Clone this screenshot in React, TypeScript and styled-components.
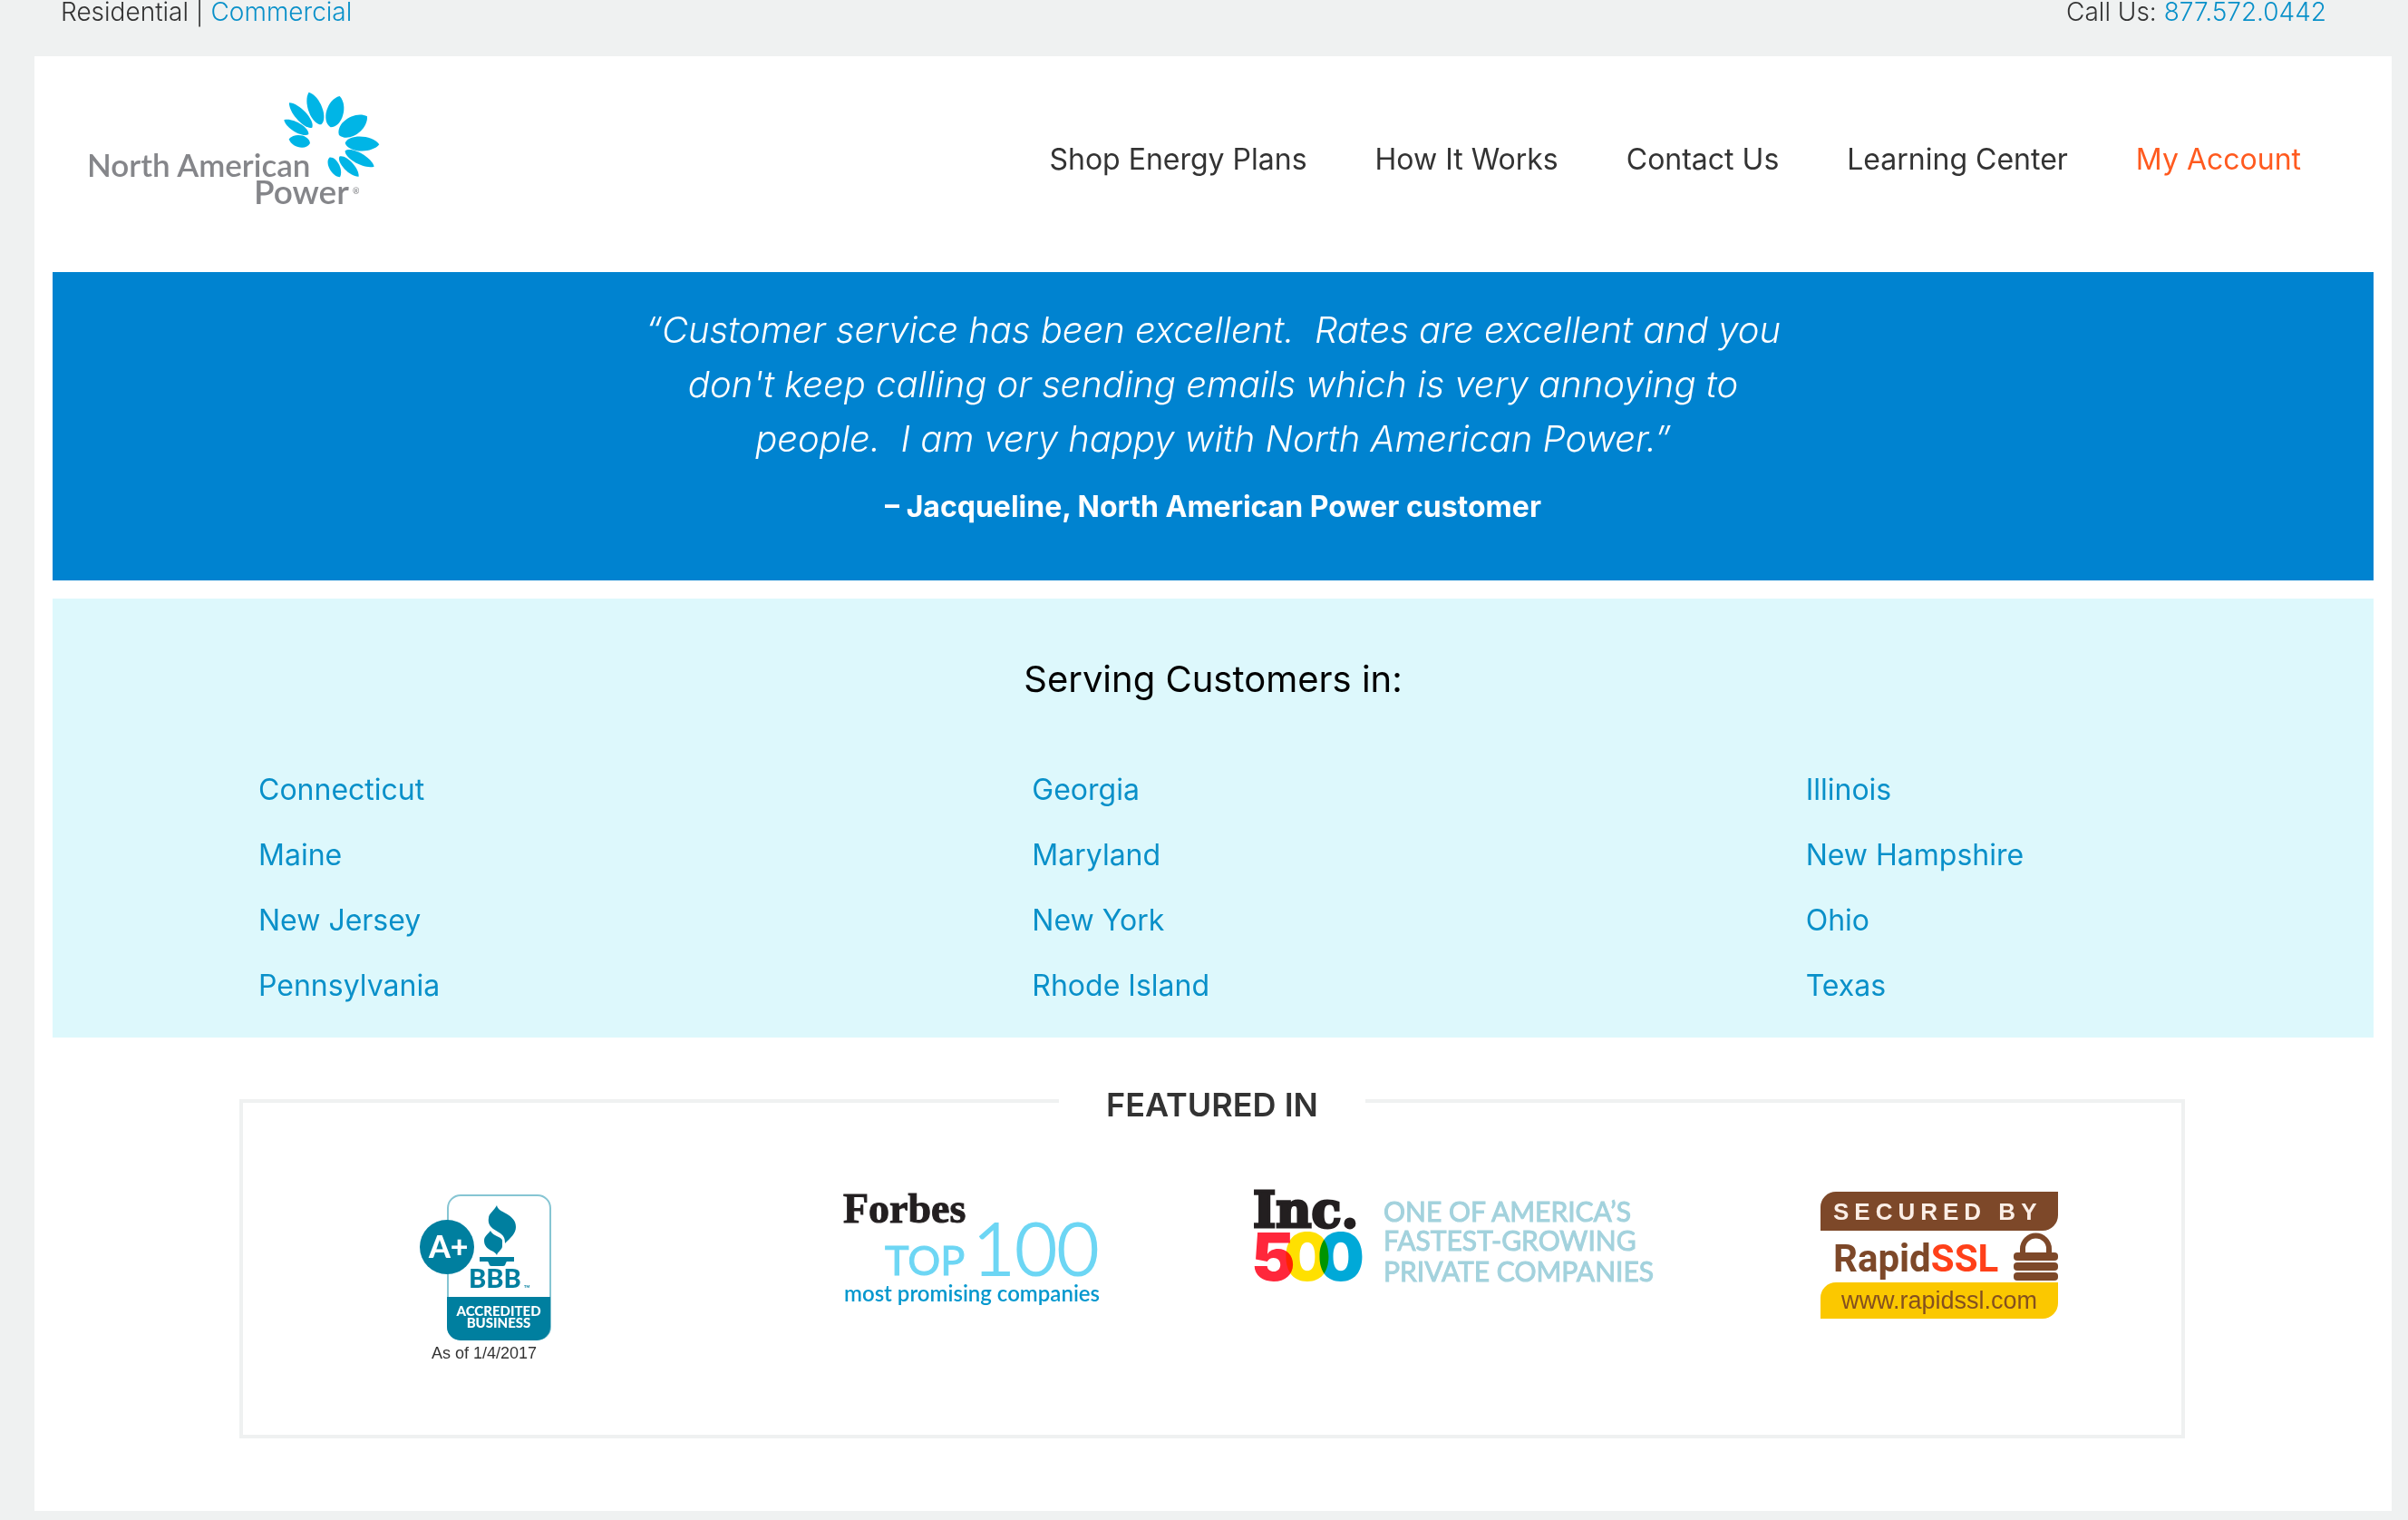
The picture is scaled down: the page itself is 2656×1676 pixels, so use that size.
import React from 'react';
import styled, { createGlobalStyle } from 'styled-components';

const color = {
  page: '#eff1f1',
  ink: '#333333',
  link: '#0990c9',
  accent: '#ff5a1f',
  brand: '#0083d0',
  mist: '#ddf8fc',
  teal: '#007f9f',
  brown: '#7d4829',
};

const GlobalStyle = createGlobalStyle`
  *, *::before, *::after { box-sizing: border-box; }
  body {
    margin: 0;
    background: ${color.page};
    color: ${color.ink};
    font-family: Inter, 'Open Sans', sans-serif;
    font-size: 32px;
    line-height: 40px;
  }
  ul, h2, p, blockquote, figure { margin: 0; padding: 0; }
  ul { list-style: none; }
  svg { display: block; overflow: visible; }
`;

const TopBar = styled.div`
  display: flex;
  justify-content: space-between;
  padding: 0 90px 36px 67px;
  font-size: 28px;
  font-weight: 300;
  line-height: 26px;
`;

const TextLink = styled.a`
  color: ${color.link};
  text-decoration: none;
`;

const Card = styled.div`
  margin: 0 18px 10px 38px;
  padding: 0 20px 80px;
  background: #ffffff;
`;

const Header = styled.header`
  display: flex;
  justify-content: space-between;
  align-items: flex-start;
  padding: 40px 80px 72px 40px;
`;

const Nav = styled.nav`
  display: flex;
  gap: 75px;
  padding-top: 54px;
`;

const NavLink = styled.a<{ $highlight?: boolean }>`
  color: ${(p) => (p.$highlight ? color.accent : color.ink)};
  text-decoration: none;
`;

const Testimonial = styled.figure`
  padding: 34px 40px 61px;
  background: ${color.brand};
  color: #ffffff;
  text-align: center;
`;

const Quote = styled.blockquote`
  max-width: 1270px;
  margin: 0 auto 25px;
  font-size: 40px;
  font-style: italic;
  font-weight: 300;
  line-height: 60px;
`;

const Attribution = styled.figcaption`
  font-weight: 700;
`;

const Serving = styled.section`
  margin-top: 20px;
  padding: 59px 0 21px;
  background: ${color.mist};
`;

const ServingTitle = styled.h2`
  margin-bottom: 56px;
  color: #000000;
  font-size: 40px;
  font-weight: 400;
  line-height: 60px;
  text-align: center;
`;

const StateGrid = styled.ul`
  display: grid;
  grid-template-columns: repeat(3, 1fr);
`;

const StateItem = styled.li`
  padding-left: 227px;
  line-height: 72px;
`;

const Featured = styled.section`
  margin: 68px 208px 0 206px;
  border: 4px solid ${color.page};
`;

const FeaturedTitle = styled.h2`
  width: fit-content;
  margin: -20px auto 74px;
  padding: 0 52px;
  background: #ffffff;
  font-size: 36px;
  font-weight: 600;
  line-height: 44px;
`;

const LogoRow = styled.ul`
  display: grid;
  grid-template-columns: repeat(4, 1fr);
  justify-items: center;
  align-items: start;
  padding-bottom: 82px;
`;

type Petal = [number, number, number, number, number];

/* inner point, outer point, thickness */
const petals: Petal[] = [
  [786, 204, 716, 190, 40],
  [781, 174, 700, 127, 32],
  [793, 152, 717, 70, 36],
  [823, 142, 782, 35, 46],
  [854, 151, 884, 48, 56],
  [882, 177, 975, 115, 60],
  [902, 203, 1015, 208, 48],
  [902, 229, 998, 281, 36],
  [883, 248, 947, 314, 32],
  [850, 251, 885, 316, 34],
];

const petalPath = ([x0, y0, x1, y1, w]: Petal) => {
  const dx = x1 - x0;
  const dy = y1 - y0;
  const len = Math.hypot(dx, dy);
  const nx = (-dy / len) * (w / 1.5);
  const ny = (dx / len) * (w / 1.5);
  const at = (t: number, side: number) =>
    `${x0 + dx * t + nx * side} ${y0 + dy * t + ny * side}`;
  return `M${x0} ${y0}C${at(0.1, 1)} ${at(0.8, 1)} ${x1} ${y1}C${at(0.8, -1)} ${at(0.1, -1)} ${x0} ${y0}Z`;
};

const BrandLogo = () => (
  <svg width="320" height="126" viewBox="0 0 320 126" role="img" aria-label="North American Power">
    <g transform="translate(-18 -12) scale(0.3333)" fill="#00b5e6">
      {petals.map((p) => (
        <path key={p.join()} d={petalPath(p)} />
      ))}
    </g>
    <g fill="#85868a" fontFamily="Lato, sans-serif" fontWeight="600" fontSize="35">
      <text x="-2" y="93">North American</text>
      <text x="182" y="123" fontSize="37">Power</text>
      <text x="291" y="112" fontSize="9">®</text>
    </g>
  </svg>
);

const BbbLogo = () => (
  <svg width="146" height="186" viewBox="0 0 146 186" role="img" aria-label="BBB Accredited Business">
    <rect x="32" y="4" width="113" height="159" rx="14" fill="#ffffff" stroke="#86c5d3" strokeWidth="2" />
    <path d="M31 116H145V149a15 15 0 0 1-15 15H46a15 15 0 0 1-15-15Z" fill={color.teal} />
    <circle cx="31" cy="61" r="30" fill={color.teal} />
    <g fill={color.teal}>
      <path d="M86 15C87 20 91 21 96 24C103 28 107 32 107 39C107 46 101 51 95 57C95 52 94 49 90 46L82 41C78 38 76 34 77 29C77 24 83 21 86 15Z" />
      <path d="M79 43C76 47 72 49 72 54C72 60 76 63 80 65C83 66 85 68 86 70C87 66 92 64 92 60V54C92 52 90 51 88 50C84 48 80 46 79 43Z" />
      <path d="M67 72H105V77H97C95 79 96 82 93 82H80C77 82 78 79 76 77H67Z" />
    </g>
    <g fontFamily="Lato, sans-serif" fontWeight="900">
      <text x="11" y="73" fontSize="34" fill="#ffffff">A+</text>
      <text x="55" y="106" fontSize="29" fill={color.teal}>BBB</text>
      <text x="116" y="106" fontSize="4" fill={color.teal}>TM</text>
      <g fontSize="15" fill="#ffffff" textAnchor="middle">
        <text x="88" y="137">ACCREDITED</text>
        <text x="88" y="150">BUSINESS</text>
      </g>
    </g>
    <text x="14" y="184" fontFamily="'Liberation Sans', sans-serif" fontSize="18" fill="#333333">
      As of 1/4/2017
    </text>
  </svg>
);

const ForbesLogo = () => (
  <svg width="280" height="126" viewBox="0 0 280 126" role="img" aria-label="Forbes Top 100 most promising companies">
    <text x="0" y="34" fontFamily="'Liberation Serif', serif" fontWeight="700" fontSize="46" fill="#231f20" stroke="#231f20">
      Forbes
    </text>
    <g fontFamily="Lato, sans-serif" fill="#6dd6f4" stroke="#6dd6f4">
      <text x="46" y="92" fontSize="45">TOP</text>
      <text x="143" y="92" fontSize="80" fontWeight="300" strokeWidth="2">100</text>
    </g>
    <text x="1" y="121" fontFamily="Lato, sans-serif" fontWeight="600" fontSize="24" fill="#0598ce">
      most promising companies
    </text>
  </svg>
);

const digits: [number, string][] = [
  [-4, '#ff273b'],
  [32, '#ffe000'],
  [69, '#00a9d8'],
];

const Digit = styled.text`
  mix-blend-mode: multiply;
`;

const IncLogo = () => (
  <svg width="440" height="102" viewBox="0 0 440 102" role="img" aria-label="Inc. 500">
    <text x="-2" y="39" fontFamily="'DejaVu Serif', serif" fontWeight="700" fontSize="54" fill="#231f20" stroke="#231f20" strokeWidth="3">
      Inc.
    </text>
    <g fontFamily="Inter, sans-serif" fontWeight="900" fontSize="73">
      {digits.map(([x, fill], i) => (
        <Digit key={fill} x={x} y="98" fill={fill}>
          {i === 0 ? '5' : '0'}
        </Digit>
      ))}
    </g>
    <g fontFamily="Lato, sans-serif" fontSize="30" fill="#a3d2dd" stroke="#a3d2dd">
      <text x="142" y="33">ONE OF AMERICA’S</text>
      <text x="142" y="65">FASTEST-GROWING</text>
      <text x="142" y="99">PRIVATE COMPANIES</text>
    </g>
  </svg>
);

const SslLogo = () => (
  <svg width="262" height="140" viewBox="0 0 262 140" role="img" aria-label="Secured by RapidSSL">
    <path d="M17 0H262V26a17 17 0 0 1-17 17H0V17A17 17 0 0 1 17 0Z" fill={color.brown} />
    <path d="M17 100H262V123a17 17 0 0 1-17 17H0V117a17 17 0 0 1 17-17Z" fill="#fbc800" />
    <text x="14" y="31" fontFamily="'Liberation Sans', sans-serif" fontWeight="700" fontSize="26" letterSpacing="6" fill="#fbeee6">
      SECURED BY
    </text>
    <text x="14" y="88" fontFamily="Roboto, sans-serif" fontWeight="700" fontSize="42" fill={color.brown}>
      Rapid<tspan fill="#ff4019">SSL</tspan>
    </text>
    <path d="M223 70V63a14 14 0 0 1 29 0V70" fill="none" stroke={color.brown} strokeWidth="6" />
    <g fill={color.brown}>
      <rect x="213" y="67" width="49" height="9" rx="4" />
      <rect x="213" y="78" width="49" height="9" rx="4" />
      <rect x="213" y="89" width="49" height="9" rx="4" />
    </g>
    <text x="23" y="129" fontFamily="'Liberation Sans', sans-serif" fontSize="27" fill="#84501f">
      www.rapidssl.com
    </text>
  </svg>
);

const navItems = ['Shop Energy Plans', 'How It Works', 'Contact Us', 'Learning Center', 'My Account'];

const states = [
  'Connecticut', 'Georgia', 'Illinois',
  'Maine', 'Maryland', 'New Hampshire',
  'New Jersey', 'New York', 'Ohio',
  'Pennsylvania', 'Rhode Island', 'Texas',
];

const logos = [BbbLogo, ForbesLogo, IncLogo, SslLogo];

export default function App() {
  return (
    <>
      <GlobalStyle />
      <TopBar>
        <div>
          Residential | <TextLink href="#commercial">Commercial</TextLink>
        </div>
        <div>
          Call Us: <TextLink href="tel:8775720442">877.572.0442</TextLink>
        </div>
      </TopBar>
      <Card>
        <Header>
          <a href="#home">
            <BrandLogo />
          </a>
          <Nav>
            {navItems.map((item) => (
              <NavLink key={item} href="#nav" $highlight={item === 'My Account'}>
                {item}
              </NavLink>
            ))}
          </Nav>
        </Header>
        <main>
          <Testimonial>
            <Quote>
              “Customer service has been excellent.&nbsp; Rates are excellent and you don't keep calling or
              sending emails which is very annoying to people.&nbsp; I am very happy with North American
              Power.”
            </Quote>
            <Attribution>– Jacqueline, North American Power customer</Attribution>
          </Testimonial>
          <Serving>
            <ServingTitle>Serving Customers in:</ServingTitle>
            <StateGrid>
              {states.map((state) => (
                <StateItem key={state}>
                  <TextLink href="#state">{state}</TextLink>
                </StateItem>
              ))}
            </StateGrid>
          </Serving>
          <Featured>
            <FeaturedTitle>FEATURED IN</FeaturedTitle>
            <LogoRow>
              {logos.map((Logo, i) => (
                <li key={i}>
                  <Logo />
                </li>
              ))}
            </LogoRow>
          </Featured>
        </main>
      </Card>
    </>
  );
}
